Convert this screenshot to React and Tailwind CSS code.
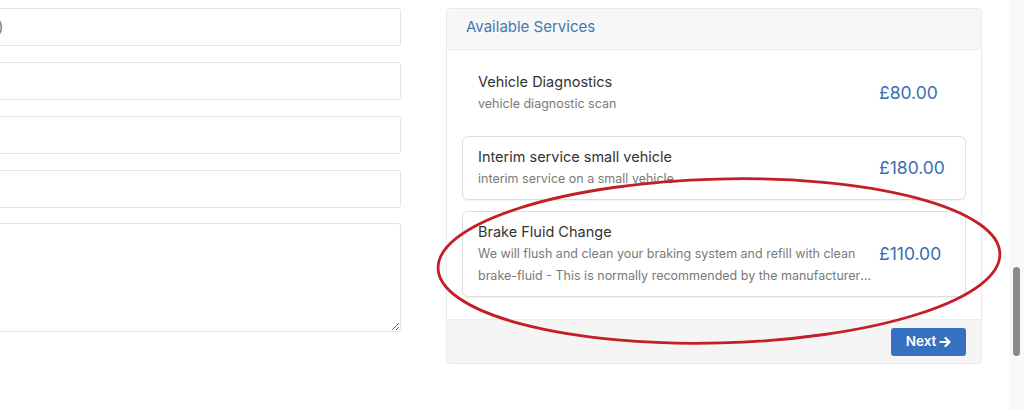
import React from "react";

const services = [
  {
    name: "Vehicle Diagnostics",
    desc: "vehicle diagnostic scan",
    price: "£80.00",
    boxed: false,
  },
  {
    name: "Interim service small vehicle",
    desc: "interim service on a small vehicle",
    price: "£180.00",
    boxed: true,
  },
  {
    name: "Brake Fluid Change",
    desc: "We will flush and clean your braking system and refill with clean brake-fluid - This is normally recommended by the manufacturer every 2 years",
    price: "£110.00",
    boxed: true,
  },
];

function Field({ children }) {
  return (
    <div className="h-[38px] rounded-[3px] border border-[#e4e4e4] bg-white flex items-center pl-[7px] text-[15px] text-[#777]">
      {children}
    </div>
  );
}

function ServiceRow({ s }) {
  return (
    <div
      className={
        "flex items-center rounded-[6px] border pl-[15px] py-[9px] " +
        (s.boxed ? "border-[#dedede] shadow-[0_1px_2px_rgba(0,0,0,0.06)]" : "border-transparent")
      }
    >
      <div className="flex-1 min-w-0">
        <p className="text-[14.5px] leading-[22px] text-[#333]">{s.name}</p>
        <p className="text-[12.5px] leading-[22px] text-[#7a7a7a] line-clamp-2">{s.desc}</p>
      </div>
      <div className="w-[90px] shrink-0 pl-[4px] text-[17.5px] text-[#3a6db0]">{s.price}</div>
    </div>
  );
}

export default function App() {
  return (
    <div
      className="relative h-[410px] w-[1024px] overflow-hidden bg-white flex"
      style={{ fontFamily: "Inter, 'Noto Sans', sans-serif" }}
    >
      {/* ── left form column (cut off) ── */}
      <div className="-ml-[10px] w-[411px] shrink-0 pt-[8px] flex flex-col gap-[16px]">
        <Field>)</Field>
        <Field />
        <Field />
        <Field />
        <textarea className="h-[109px] -mt-[1px] rounded-[3px] border border-[#e4e4e4] bg-white outline-none" />
      </div>

      {/* ── services card ── */}
      <div className="ml-[45px] mt-[8px] w-[536px] h-[356px] shrink-0 rounded-[4px] border border-[#e9e9e9] flex flex-col overflow-hidden">
        <div className="h-[41px] bg-[#f7f7f7] border-b border-[#ececec] flex items-center px-[19px] pb-[3px]">
          <h3 className="text-[15px] text-[#4577b6]">Available Services</h3>
        </div>
        <div className="flex-1 px-[15px] pt-[11px] flex flex-col gap-[11px]">
          {services.map(s => (
            <ServiceRow key={s.name} s={s} />
          ))}
        </div>
        <div className="h-[44px] bg-[#f5f5f5] border-t border-[#ececec] flex items-center justify-end px-[15px]">
          <button className="h-[28px] w-[75px] rounded-[3px] bg-[#3571c0] text-white text-[13.5px] font-semibold flex items-center justify-center gap-[3px]">
            Next
            <svg width="12" height="12" viewBox="0 0 12 12" fill="none" stroke="white" strokeWidth="2.2" strokeLinecap="round" strokeLinejoin="round">
              <path d="M1.5 6h8.5M6.5 2l4 4-4 4" />
            </svg>
          </button>
        </div>
      </div>

      {/* ── page scrollbar ── */}
      <div className="ml-auto w-[15px] h-full bg-[#f9f9f9] flex justify-center">
        <div className="mt-[267px] w-[7px] h-[89px] rounded-full bg-[#8a8a8a]" />
      </div>

      {/* ── red hand-drawn annotation ── */}
      <svg className="absolute inset-0 pointer-events-none" width="1024" height="410">
        <ellipse cx="719" cy="261" rx="281" ry="82" fill="none" stroke="#c41e26" strokeWidth="2.8" transform="rotate(-1.5 719 261)" />
      </svg>
    </div>
  );
}
